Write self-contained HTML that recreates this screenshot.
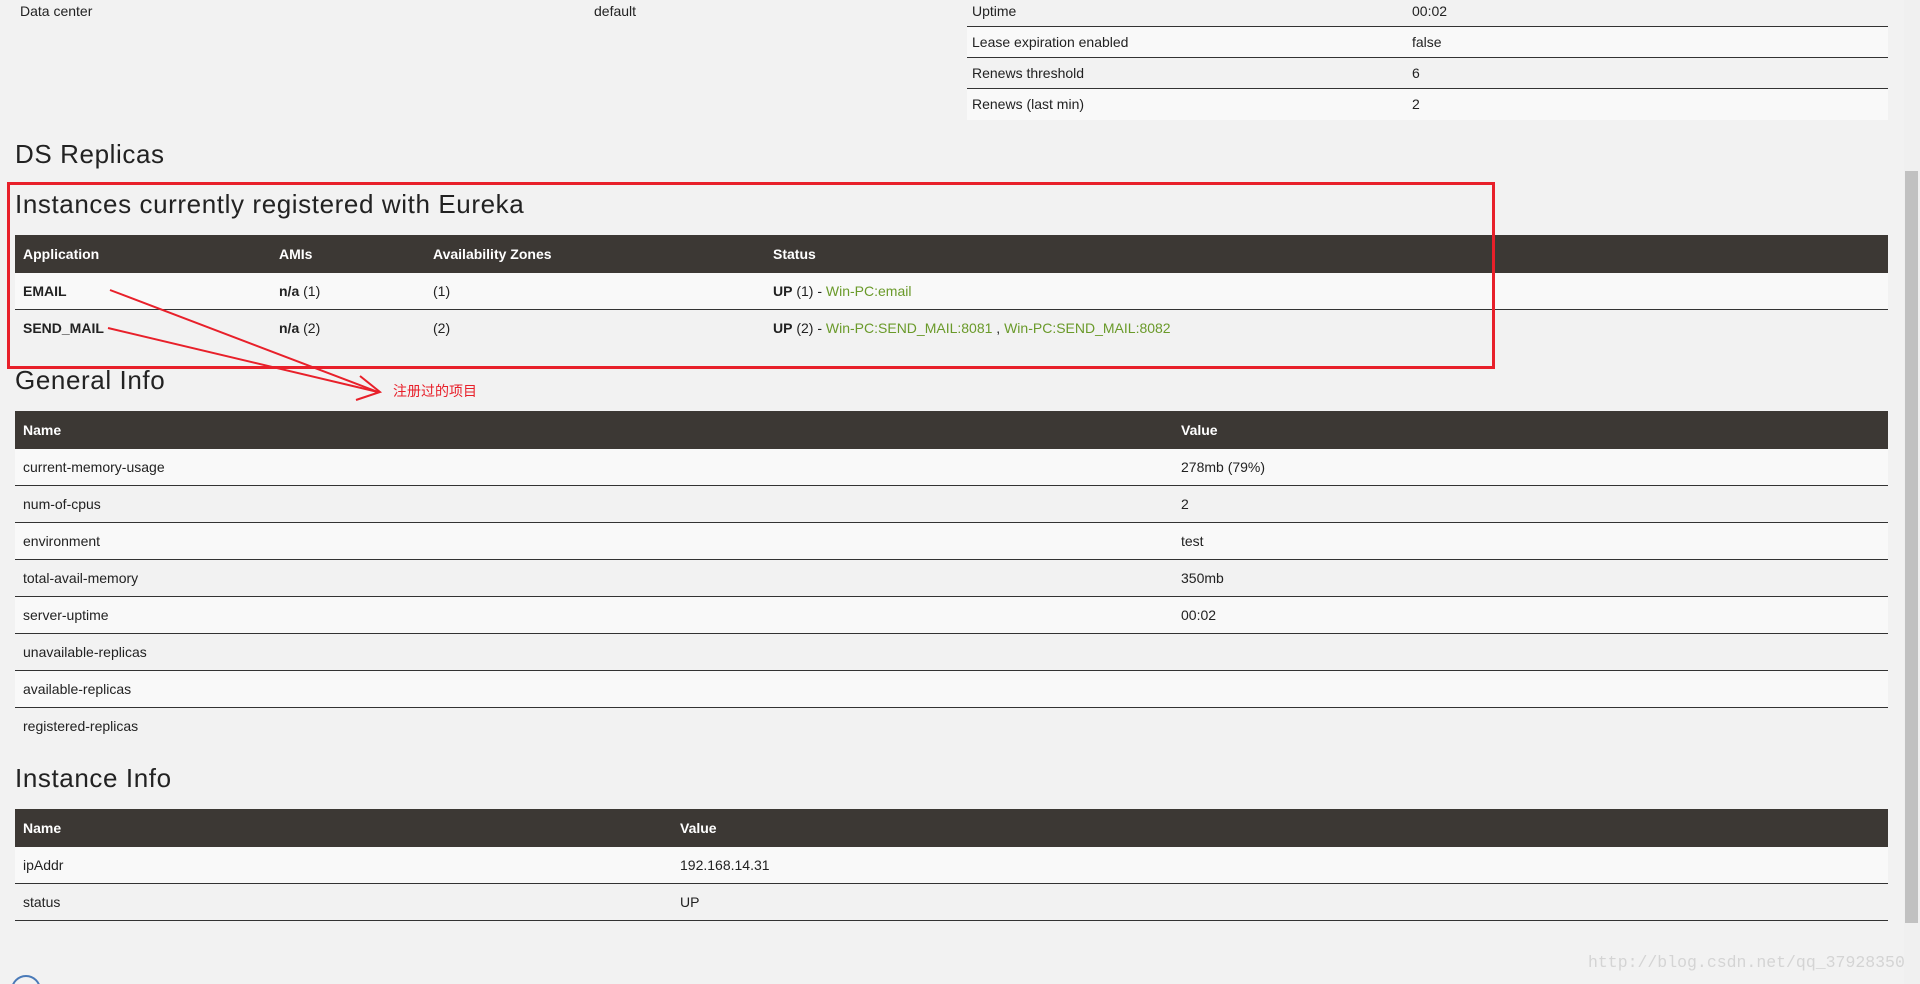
<!DOCTYPE html>
<html><head><meta charset="utf-8"><style>
body{margin:0;width:1920px;height:984px;background:#f2f2f2;font-family:"Liberation Sans","Noto Sans CJK SC",sans-serif;font-size:14px;color:#222;position:relative;overflow:hidden}
.a{position:absolute}
table{border-collapse:collapse;position:absolute}
td,th{padding:0 0 0 8px;text-align:left;vertical-align:middle}
th{background:#3c3834;color:#fff;font-weight:bold;height:38px}
tr.r td{height:36px;border-bottom:1px solid #333}
tr.r:nth-child(even) td{background:#f9f9f9}
tr.r:last-child td{border-bottom:none}
h2{position:absolute;margin:0;font-weight:normal;font-size:26px;letter-spacing:0.6px;color:#222;left:15px}
.g{color:#6a9a2a}
.rr{position:absolute;left:967px;width:921px;height:30px;border-bottom:1px solid #333;line-height:30px}
.rr span{position:absolute;left:5px}
.rr span+span{left:445px}
</style></head><body>
<div class="a" style="left:20px;top:3px">Data center</div>
<div class="a" style="left:594px;top:3px">default</div>
<div class="rr" style="top:-4px;background:#f2f2f2"><span>Uptime</span><span>00:02</span></div>
<div class="rr" style="top:27px;background:#f9f9f9"><span>Lease expiration enabled</span><span>false</span></div>
<div class="rr" style="top:58px;background:#f2f2f2"><span>Renews threshold</span><span>6</span></div>
<div class="rr" style="top:89px;background:#f9f9f9;border-bottom:none;height:31px"><span>Renews (last min)</span><span>2</span></div>
<h2 style="top:139px">DS Replicas</h2>
<h2 style="top:189px">Instances currently registered with Eureka</h2>
<table style="left:15px;top:235px;width:1873px">
<tr><th style="width:248px">Application</th><th style="width:146px">AMIs</th><th style="width:332px">Availability Zones</th><th>Status</th></tr>
<tr class="r"><td style="background:#f9f9f9"><b>EMAIL</b></td><td style="background:#f9f9f9"><b>n/a</b> (1)</td><td style="background:#f9f9f9">(1)</td><td style="background:#f9f9f9"><b>UP</b> (1) - <span class="g">Win-PC:email</span></td></tr>
<tr class="r"><td style="background:#f2f2f2"><b>SEND_MAIL</b></td><td style="background:#f2f2f2"><b>n/a</b> (2)</td><td style="background:#f2f2f2">(2)</td><td style="background:#f2f2f2"><b>UP</b> (2) - <span class="g">Win-PC:SEND_MAIL:8081</span> , <span class="g">Win-PC:SEND_MAIL:8082</span></td></tr>
</table>
<div class="a" style="left:7px;top:182px;width:1482px;height:181px;border:3px solid #e8202a"></div>
<h2 style="top:365px">General Info</h2>
<table style="left:15px;top:411px;width:1873px">
<tr><th style="width:1150px;height:37px">Name</th><th>Value</th></tr>
<tr class="r"><td>current-memory-usage</td><td>278mb (79%)</td></tr>
<tr class="r"><td>num-of-cpus</td><td>2</td></tr>
<tr class="r"><td>environment</td><td>test</td></tr>
<tr class="r"><td>total-avail-memory</td><td>350mb</td></tr>
<tr class="r"><td>server-uptime</td><td>00:02</td></tr>
<tr class="r"><td>unavailable-replicas</td><td></td></tr>
<tr class="r"><td>available-replicas</td><td></td></tr>
<tr class="r"><td>registered-replicas</td><td></td></tr>
</table>
<h2 style="top:763px">Instance Info</h2>
<table style="left:15px;top:809px;width:1873px">
<tr><th style="width:649px;height:37px">Name</th><th>Value</th></tr>
<tr class="r"><td style="background:#f9f9f9">ipAddr</td><td style="background:#f9f9f9">192.168.14.31</td></tr>
<tr class="r"><td style="background:#f2f2f2;border-bottom:1px solid #333">status</td><td style="background:#f2f2f2;border-bottom:1px solid #333">UP</td></tr>
</table>
<svg class="a" style="left:0;top:0" width="1920" height="984">
<g stroke="#e8202a" stroke-width="2" fill="none">
<line x1="110" y1="290" x2="378" y2="392"/>
<line x1="108" y1="328" x2="378" y2="392"/>
<polyline points="360,376 380,392 356,400"/>
</g>
<circle cx="26" cy="990" r="14" fill="none" stroke="#4a7ab8" stroke-width="2"/>
</svg>
<div class="a" style="left:393px;top:381px;color:#e8202a;font-size:14px">注册过的项目</div>
<div class="a" style="left:1904px;top:0;width:16px;height:984px;background:#f0f0f0"></div>
<div class="a" style="left:1905px;top:171px;width:13px;height:752px;background:#c1c1c1"></div>
<div class="a" style="left:1588px;top:953px;color:#d4d4d4;font-family:'Liberation Mono',monospace;font-size:16.5px;white-space:nowrap">http://blog.csdn.net/qq_37928350</div>
</body></html>
